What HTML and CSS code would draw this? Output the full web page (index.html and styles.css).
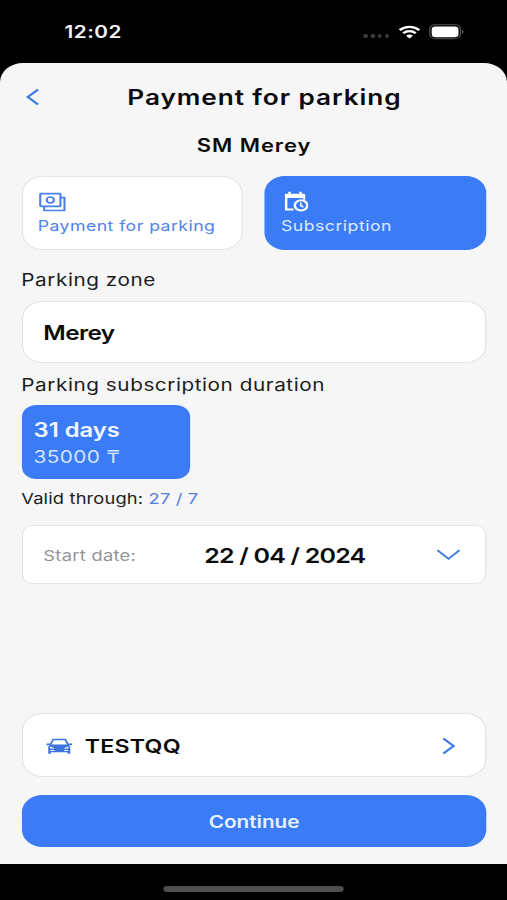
FILE: index.html
```
<!DOCTYPE html>
<html lang="en">
<head>
    <meta charset="UTF-8">
    <meta name="viewport" content="width=device-width, initial-scale=1.0">
    <title>Payment for parking</title>

    <link rel="stylesheet" href="styles.css">
</head>
<body>
    <div class="phone">
        <div class="status-bar">
            <div class="time">12:02</div>
            <div class="status-icons">
                <div class="dots"><i></i><i></i><i></i><i></i></div>
                <svg class="wifi" width="18" height="14" viewBox="0 0 18 14" fill="none" stroke="#fff" stroke-width="2.3">
                    <path d="M1 5.1a11.6 11.6 0 0 1 16 0"/>
                    <path d="M3.9 8.3a7.3 7.3 0 0 1 10.2 0"/>
                    <path d="M9 13.6L6.2 10.8a4 4 0 0 1 5.6 0z" fill="#fff" stroke="none"/>
                </svg>
                <svg class="battery" width="29" height="16" viewBox="0 0 29 16">
                    <rect x="0.6" y="0.8" width="25.2" height="14" rx="4.5" fill="none" stroke="#555" stroke-width="1"/>
                    <rect x="2.2" y="2.4" width="22" height="10.8" rx="3.2" fill="#fff"/>
                    <path d="M27 5.8v4c1.6-.6 1.6-3.4 0-4z" fill="#666"/>
                </svg>
            </div>
        </div>

        <div class="screen">
            <div class="header">
                <svg class="back" width="12" height="18" viewBox="0 0 12 18" fill="none" stroke="#3b7be0" stroke-width="2">
                    <path d="M10.2 1.4L1.8 9l8.4 7.6"/>
                </svg>
                <h1>Payment for parking</h1>
            </div>
            <h2>SM Merey</h2>

            <div class="tabs">
                <div class="tab">
                    <svg width="23" height="20" viewBox="0 0 23 20" fill="none" stroke="#4a80e4" stroke-width="1.7">
                        <rect x="1" y="1.7" width="16.6" height="12.6" rx="0.6"/>
                        <ellipse cx="9.3" cy="8" rx="3" ry="3"/>
                        <path d="M4.2 14.4v4.1h16.7V5.6h-3"/>
                    </svg>
                    <span>Payment for parking</span>
                </div>
                <div class="tab active">
                    <svg width="21" height="23" viewBox="0 0 21 23" fill="none" stroke="#fff">
                        <rect x="1.8" y="2.8" width="16.6" height="4.2" rx="1" fill="#fff" stroke="none"/>
                        <path d="M2.8 5v13.6h6M17.4 6v3M5.6 .8v3M14.6 .8v3" stroke-width="2"/>
                        <circle cx="15" cy="14.4" r="6.5" fill="#3b7cf6" stroke="none"/>
                        <circle cx="15" cy="14.4" r="5.1" stroke-width="2"/>
                        <path d="M14.8 11.6v3l2.2 1.5" stroke-width="1.3"/>
                    </svg>
                    <span>Subscription</span>
                </div>
            </div>

            <p class="label">Parking zone</p>
            <div class="zone">Merey</div>

            <p class="label label-duration">Parking subscription duration</p>
            <div class="plan">
                <span class="plan-days">31 days</span>
                <span class="plan-price">35000 ₸</span>
            </div>
            <p class="valid">Valid through: <span>27 / 7</span></p>

            <div class="date">
                <span class="date-label">Start date:</span>
                <span class="date-value">22 / 04 / 2024</span>
                <svg width="20" height="12" viewBox="0 0 20 12" fill="none" stroke="#3b7be0" stroke-width="1.8" stroke-linecap="round">
                    <path d="M1.4 1.6L10 9.8l8.6-8.2"/>
                </svg>
            </div>

            <div class="car">
                <svg class="car-icon" width="22" height="18" viewBox="0 0 22 18" fill="none" stroke="#3b74dc" stroke-width="1.5">
                    <path d="M3.4 7.8L5.6 2.4h10L17.8 7.8"/>
                    <path d="M0 7.4h3.4M17.8 7.4h3.4" stroke-width="1.6"/>
                    <path d="M1.6 16.8V9.4l1.8-2h14.4l1.8 2v7.4h-2.2v-1.6H3.8v1.6z" fill="#3b74dc" stroke="none"/>
                    <path d="M3 9.6l3.6 1.4-.6.8-3-.6zM18.2 9.6l-3.6 1.4.6.8 3-.6zM3.4 13h2.8l.8 1H3.4zM17.8 13H15l-.8 1h3.6z" fill="#fff" stroke="none"/>
                </svg>
                <span>TESTQQ</span>
                <svg class="car-arrow" width="12" height="18" viewBox="0 0 12 18" fill="none" stroke="#3b7be0" stroke-width="2">
                    <path d="M1.8 1.4L10.2 9l-8.4 7.6"/>
                </svg>
            </div>

            <button class="continue">Continue</button>
        </div>

        <div class="home-bar"></div>
    </div>
</body>
</html>
```
FILE: styles.css
```
* {
    margin: 0;
    padding: 0;
    box-sizing: border-box;
}

body {
    width: 507px;
    height: 900px;
    overflow: hidden;
    background: #000;
    font-family: Inter, 'Liberation Sans', sans-serif;
}

/* 416px wide layout stretched to the full window */
.phone {
    display: flex;
    flex-direction: column;
    align-items: center;
    width: 416px;
    height: 900px;
    background: #000;
    transform: scaleX(1.21875);
    transform-origin: 0 0;
}

.phone svg {
    display: block;
    flex: none;
}

/* Status bar */
.status-bar {
    display: flex;
    justify-content: space-between;
    align-items: center;
    width: 100%;
    height: 63px;
    padding: 0 35px 0 53px;
}

.time {
    color: #f4f4f4;
    font-size: 17px;
    font-weight: 600;
    letter-spacing: 0.4px;
}

.status-icons {
    display: flex;
    align-items: center;
}

.dots {
    display: flex;
    gap: 2.2px;
    margin: 9px 8px 0 0;
}

.dots i {
    width: 3.5px;
    height: 4px;
    border-radius: 50%;
    background: #3c3c3c;
}

.wifi {
    margin-right: 7px;
}

/* Main screen */
.screen {
    display: flex;
    flex-direction: column;
    width: 100%;
    height: 801px;
    padding: 0 17.5px;
    background: #f6f6f6;
    border-radius: 19px 19px 0 0;
    color: #0b0b0b;
}

.header {
    display: flex;
    align-items: center;
    height: 67px;
    padding-left: 3px;
}

h1 {
    flex: 1;
    padding-left: 3px;
    text-align: center;
    font-size: 21.5px;
    font-weight: 600;
    letter-spacing: 0.75px;
}

h2 {
    height: 30px;
    padding: 1px 0 0 1px;
    line-height: 30px;
    text-align: center;
    font-size: 18px;
    font-weight: 600;
    letter-spacing: 0.8px;
}

.tabs {
    display: flex;
    gap: 17.5px;
    margin-top: 16px;
}

.tab {
    flex: 1;
    height: 74px;
    padding: 15px 0 0 12.5px;
    background: #fff;
    border: 1px solid #e6e6e8;
    border-radius: 17px;
    color: #5184e6;
    font-size: 14.5px;
    line-height: 20px;
    letter-spacing: 0.36px;
    white-space: nowrap;
}

.tab svg {
    margin-left: 1px;
}

.tab span {
    display: block;
    margin-top: 4px;
}

.tab.active {
    padding: 14px 0 0 13px;
    background: #3b7cf6;
    border-color: #3b7cf6;
    color: #dbe9ff;
    letter-spacing: 0.4px;
}

.tab.active span {
    margin-top: 2px;
}

.label {
    height: 51px;
    padding-top: 19px;
    line-height: 22px;
    font-size: 17px;
    letter-spacing: 0.45px;
    color: #1c1c1c;
    white-space: nowrap;
}

.label-duration {
    height: 42px;
    padding-top: 11px;
}

.zone {
    height: 62px;
    padding-left: 17px;
    line-height: 62px;
    background: #fff;
    border: 1px solid #e4e4e6;
    border-radius: 17px;
    font-size: 20px;
    font-weight: 600;
    letter-spacing: -0.5px;
}

.plan {
    display: flex;
    flex-direction: column;
    width: 138.5px;
    height: 74px;
    padding: 11px 0 0 10px;
    background: #3b7cf6;
    border-radius: 12px;
}

.plan-days {
    color: #f2f7ff;
    font-size: 19.5px;
    font-weight: 600;
    line-height: 28px;
}

.plan-price {
    color: #d5e5ff;
    font-size: 17px;
    line-height: 27px;
    letter-spacing: 0.35px;
}

.valid {
    height: 46px;
    padding-top: 9px;
    line-height: 21px;
    font-size: 15px;
    letter-spacing: 0.14px;
    color: #1c1c1c;
}

.valid span {
    color: #5580dd;
}

.date {
    display: flex;
    align-items: center;
    height: 59px;
    padding: 1px 19.5px 0 17px;
    background: #fff;
    border: 1px solid #e4e4e6;
    border-radius: 9px;
}

.date-label {
    width: 132px;
    color: #929599;
    font-size: 15px;
    letter-spacing: 0.25px;
}

.date-value {
    flex: 1;
    font-size: 20.5px;
    font-weight: 600;
    letter-spacing: -0.64px;
    white-space: nowrap;
}

.car {
    display: flex;
    align-items: center;
    height: 64px;
    margin-top: auto;
    padding: 1px 24px 0 19px;
    background: #fff;
    border: 1px solid #e4e4e6;
    border-radius: 17px;
}

.car span {
    flex: 1;
    margin-left: 10px;
    padding-top: 1px;
    font-size: 19px;
    font-weight: 600;
    letter-spacing: 0.2px;
}

.continue {
    height: 52px;
    margin: 18px 0 17px;
    padding: 1px 0 0 1px;
    background: #3b7cf6;
    border: none;
    border-radius: 17px;
    color: #e6f0ff;
    font-family: inherit;
    font-size: 17px;
    font-weight: 600;
}

/* Home indicator */
.home-bar {
    width: 148px;
    height: 6px;
    margin-top: 22px;
    border-radius: 3px;
    background: #4e4e4e;
}
```
